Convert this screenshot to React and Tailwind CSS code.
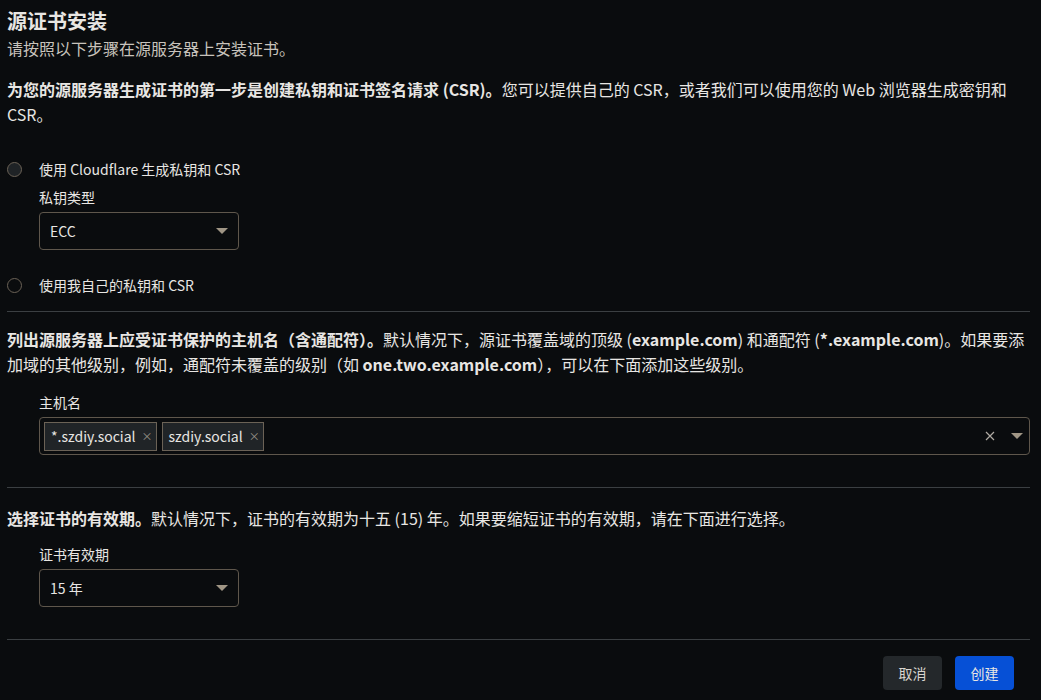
import { useState } from 'react'

const Caret = () => (
    <svg width="12" height="7" viewBox="0 0 12 7" className="shrink-0">
        <path d="M0 0 L12 0 L6 6 Z" fill="#a09685" />
    </svg>
)

const Select = ({ value }) => (
    <div className="w-[200px] h-[38px] rounded-[4px] border border-[#5f574c] flex items-center justify-between pl-[10px] pr-[10px] text-[14px] text-[#e8e6e3]">
        <span>{value}</span>
        <Caret />
    </div>
)

const Radio = ({ label, checked, onClick }) => (
    <label className="flex items-center gap-[17px] cursor-pointer" onClick={onClick}>
        <span className={`w-[15px] h-[15px] rounded-full border border-[#6b6256] ${checked ? 'bg-[#1f2326]' : ''}`} />
        <span className="text-[14px] text-[#e8e6e3]">{label}</span>
    </label>
)

const Tag = ({ text }) => (
    <div className="flex items-center h-[29px] bg-[#202427] border border-[#6b6256] pl-[6px] pr-[3px] text-[14px] text-[#e8e6e3]">
        <span>{text}</span>
        <span className="ml-[6px] text-[11px] text-[#9a948b]">×</span>
    </div>
)

export default function App() {
    const [keyMode, setKeyMode] = useState('cloudflare')

    return (
        <div className="min-h-[700px] bg-[#0a0c0e] text-[#e8e6e3] pl-[7px] pr-[11px]" style={{ fontFamily: '"Noto Sans CJK SC", "Noto Sans", sans-serif' }}>
            {/* Header */}
            <div className="pt-[6px]">
                <h1 className="text-[20px] font-bold leading-[30px]">源证书安装</h1>
                <p className="text-[16px] leading-[25px] text-[#c8c3bc]">请按照以下步骤在源服务器上安装证书。</p>
            </div>

            {/* Step 1 */}
            <p className="mt-[16px] text-[16px] leading-[25px]">
                <strong className="font-bold">为您的源服务器生成证书的第一步是创建私钥和证书签名请求 (CSR)。</strong>
                您可以提供自己的 CSR，或者我们可以使用您的 Web 浏览器生成密钥和 CSR。
            </p>

            <div className="mt-[32px] flex flex-col">
                <Radio label="使用 Cloudflare 生成私钥和 CSR" checked={keyMode === 'cloudflare'} onClick={() => setKeyMode('cloudflare')} />
                <div className="pl-[32px] mt-[7px]">
                    <div className="text-[14px] leading-[20px] mb-[5px]">私钥类型</div>
                    <Select value="ECC" />
                </div>
                <div className="mt-[25px]">
                    <Radio label="使用我自己的私钥和 CSR" checked={keyMode === 'own'} onClick={() => setKeyMode('own')} />
                </div>
            </div>

            <div className="mt-[15px] border-t border-[#3b3f42]" />

            {/* Step 2 */}
            <p className="mt-[15px] text-[16px] leading-[25px]">
                <strong className="font-bold">列出源服务器上应受证书保护的主机名（含通配符）。</strong>
                默认情况下，源证书覆盖域的顶级 (<strong className="font-bold">example.com</strong>) 和通配符 (<strong className="font-bold">*.example.com</strong>)。如果要添加域的其他级别，例如，通配符未覆盖的级别（如 <strong className="font-bold">one.two.example.com</strong>），可以在下面添加这些级别。
            </p>

            <div className="pl-[32px] mt-[15px]">
                <div className="text-[14px] leading-[20px] mb-[5px]">主机名</div>
                <div className="h-[38px] rounded-[4px] border border-[#5f574c] flex items-center pl-[4px] pr-[6px]">
                    <div className="flex items-center gap-[5px] flex-1">
                        <Tag text="*.szdiy.social" />
                        <Tag text="szdiy.social" />
                    </div>
                    <svg width="10" height="10" viewBox="0 0 10 10" className="mr-[16px]">
                        <path d="M1 1 L9 9 M9 1 L1 9" stroke="#b0aaa2" strokeWidth="1.2" />
                    </svg>
                    <Caret />
                </div>
            </div>

            <div className="mt-[32px] border-t border-[#3b3f42]" />

            {/* Step 3 */}
            <p className="mt-[18px] text-[16px] leading-[25px]">
                <strong className="font-bold">选择证书的有效期。</strong>
                默认情况下，证书的有效期为十五 (15) 年。如果要缩短证书的有效期，请在下面进行选择。
            </p>

            <div className="pl-[32px] mt-[13px]">
                <div className="text-[14px] leading-[20px] mb-[5px]">证书有效期</div>
                <Select value="15 年" />
            </div>

            <div className="mt-[32px] border-t border-[#3b3f42]" />

            {/* Footer */}
            <div className="flex justify-end gap-[13px] pt-[16px] pr-[16px]">
                <button className="w-[59px] h-[34px] rounded-[4px] bg-[#24282b] text-[14px] text-[#d8d4cf]">取消</button>
                <button className="w-[59px] h-[34px] rounded-[4px] bg-[#0650d6] text-[14px] text-[#e8e6e3]">创建</button>
            </div>
        </div>
    )
}
